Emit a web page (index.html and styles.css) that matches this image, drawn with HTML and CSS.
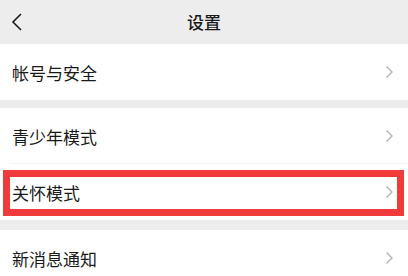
FILE: index.html
```html
<!DOCTYPE html>
<html lang="zh-CN">
<head>
<meta charset="utf-8">
<link rel="stylesheet" href="styles.css">
</head>
<body>
<div class="page">
  <header class="nav">
    <svg class="back" width="12" height="18" viewBox="0 0 12 18"><path d="M10 1 L2 9 L10 17" fill="none" stroke="#1a1a1a" stroke-width="1.6"/></svg>
    <div class="title">设置</div>
  </header>
  <div class="group">
    <div class="row"><span class="label">帐号与安全</span><svg class="arrow" width="9" height="14" viewBox="0 0 9 14"><path d="M1.5 1.5 L7 7 L1.5 12.5" fill="none" stroke="#b3b3b3" stroke-width="1.4"/></svg></div>
  </div>
  <div class="group gap1">
    <div class="row divided"><span class="label">青少年模式</span><svg class="arrow" width="9" height="14" viewBox="0 0 9 14"><path d="M1.5 1.5 L7 7 L1.5 12.5" fill="none" stroke="#b3b3b3" stroke-width="1.4"/></svg></div>
    <div class="row"><span class="label">关怀模式</span><svg class="arrow" width="9" height="14" viewBox="0 0 9 14"><path d="M1.5 1.5 L7 7 L1.5 12.5" fill="none" stroke="#b3b3b3" stroke-width="1.4"/></svg><div class="highlight"></div></div>
  </div>
  <div class="group gap2">
    <div class="row"><span class="label">新消息通知</span><svg class="arrow" width="9" height="14" viewBox="0 0 9 14"><path d="M1.5 1.5 L7 7 L1.5 12.5" fill="none" stroke="#b3b3b3" stroke-width="1.4"/></svg></div>
  </div>
</div>
</body>
</html>
```

FILE: styles.css
```css
* { box-sizing: border-box; }
html, body { margin: 0; padding: 0; }
body {
  background: #ededed;
  font-family: "Noto Sans CJK SC", "Noto Sans", sans-serif;
  color: #191919;
  width: 408px;
  height: 276px;
  overflow: hidden;
}
.page { display: flex; flex-direction: column; }
.nav {
  height: 44px;
  background: #ededed;
  display: flex;
  align-items: center;
  justify-content: center;
  position: relative;
}
.back { position: absolute; left: 11px; top: 13px; }
.title { font-size: 17px; font-weight: 500; line-height: 1; margin-top: -1px; }
.group { background: #ffffff; display: flex; flex-direction: column; }
.gap1 { margin-top: 8px; }
.gap2 { margin-top: 10px; }
.row {
  height: 56px;
  display: flex;
  align-items: center;
  justify-content: space-between;
  padding: 0 14px 0 12px;
  position: relative;
}
.divided::after {
  content: "";
  position: absolute;
  left: 12px; right: 0; bottom: 0;
  height: 1px;
  background: #f4f4f4;
}
.label { font-size: 17px; line-height: 1; }
.arrow { display: block; }
.highlight {
  position: absolute;
  left: 3px; top: 6px;
  width: 401px; height: 46px;
  border: 7px solid #ef3b3c;
}
```
